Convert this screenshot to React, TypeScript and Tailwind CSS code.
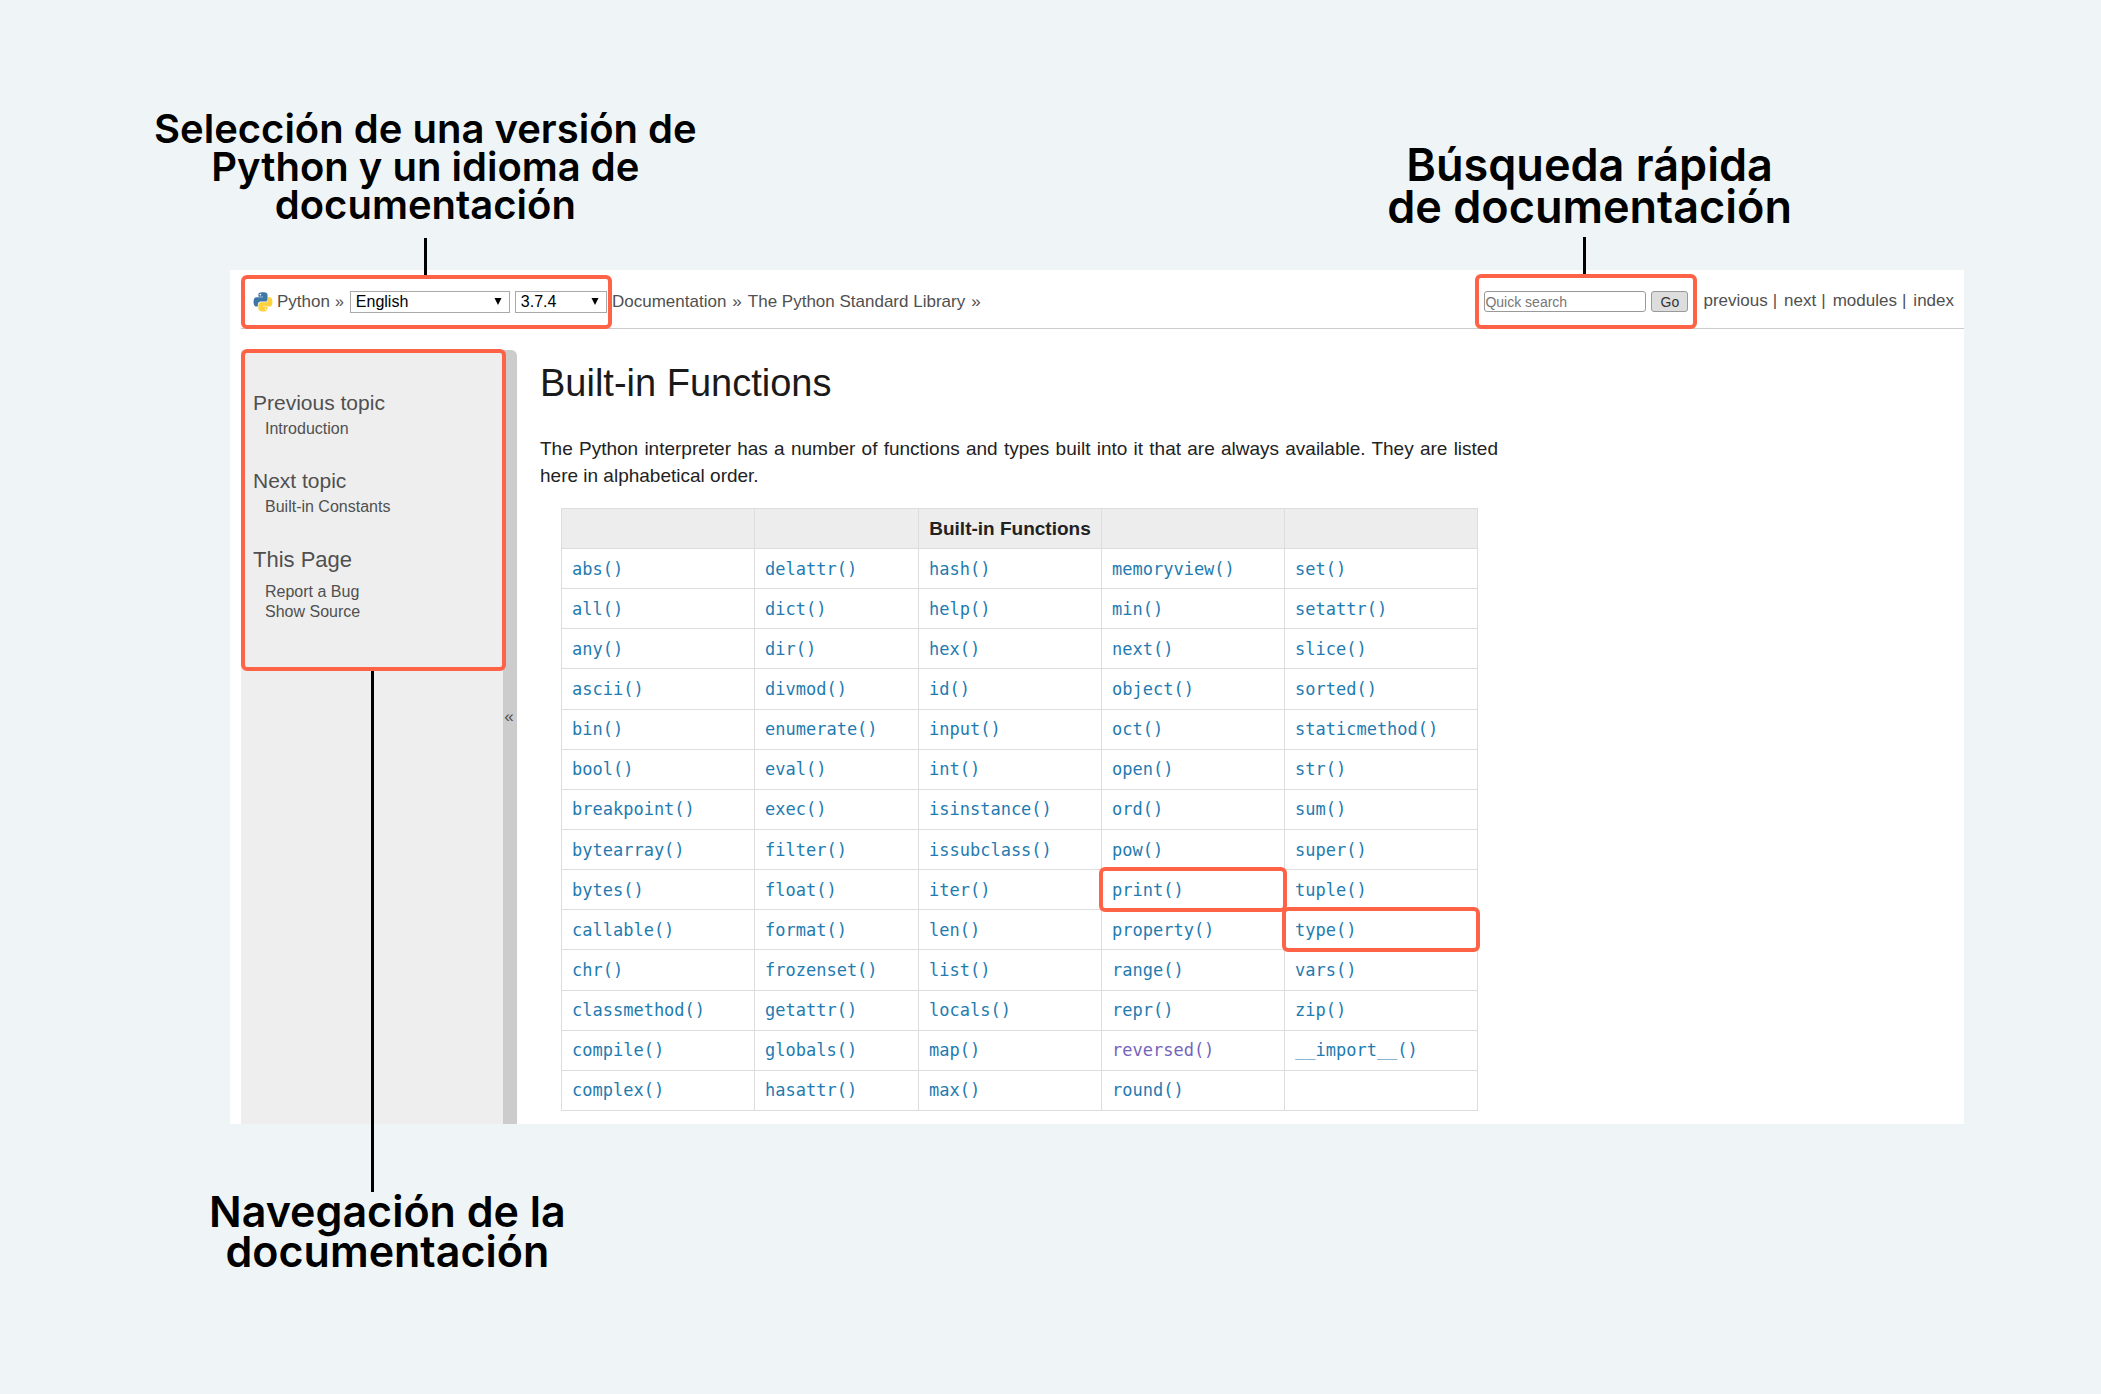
import type { ReactNode } from "react";

const rows: string[][] = [
  ["abs()", "delattr()", "hash()", "memoryview()", "set()"],
  ["all()", "dict()", "help()", "min()", "setattr()"],
  ["any()", "dir()", "hex()", "next()", "slice()"],
  ["ascii()", "divmod()", "id()", "object()", "sorted()"],
  ["bin()", "enumerate()", "input()", "oct()", "staticmethod()"],
  ["bool()", "eval()", "int()", "open()", "str()"],
  ["breakpoint()", "exec()", "isinstance()", "ord()", "sum()"],
  ["bytearray()", "filter()", "issubclass()", "pow()", "super()"],
  ["bytes()", "float()", "iter()", "print()", "tuple()"],
  ["callable()", "format()", "len()", "property()", "type()"],
  ["chr()", "frozenset()", "list()", "range()", "vars()"],
  ["classmethod()", "getattr()", "locals()", "repr()", "zip()"],
  ["compile()", "globals()", "map()", "reversed()", "__import__()"],
  ["complex()", "hasattr()", "max()", "round()", ""],
];

const highlighted = ["print()", "type()"];

function PythonLogo() {
  return (
    <svg viewBox="12 0 104 108" className="mr-1 h-5 w-5 shrink-0" aria-hidden="true">
      <path
        fill="#3d77a8"
        d="M63.391 1.988c-4.222.02-8.252.379-11.8 1.007-10.45 1.846-12.346 5.71-12.346 12.837v9.411h24.693v3.137H29.977c-7.176 0-13.46 4.313-15.426 12.521-2.268 9.405-2.368 15.275 0 25.096 1.755 7.311 5.947 12.519 13.124 12.519h8.491V67.234c0-8.151 7.051-15.34 15.426-15.34h24.665c6.866 0 12.346-5.654 12.346-12.548V15.833c0-6.693-5.646-11.72-12.346-12.837-4.244-.706-8.645-1.027-12.866-1.008zM50.037 9.557c2.55 0 4.634 2.117 4.634 4.721 0 2.593-2.083 4.69-4.634 4.69-2.56 0-4.633-2.097-4.633-4.69-.001-2.604 2.073-4.721 4.633-4.721z"
      />
      <path
        fill="#fdd23c"
        d="M91.682 28.38v10.966c0 8.5-7.208 15.655-15.426 15.655H51.591c-6.756 0-12.346 5.783-12.346 12.549v23.515c0 6.691 5.818 10.628 12.346 12.547 7.816 2.297 15.312 2.713 24.665 0 6.216-1.801 12.346-5.423 12.346-12.547v-9.412H63.938v-3.138h37.012c7.176 0 9.852-5.005 12.348-12.519 2.578-7.735 2.467-15.174 0-25.096-1.774-7.145-5.161-12.521-12.348-12.521h-9.268zM77.809 87.927c2.561 0 4.634 2.097 4.634 4.692 0 2.602-2.074 4.719-4.634 4.719-2.55 0-4.633-2.117-4.633-4.719 0-2.595 2.083-4.692 4.633-4.692z"
      />
    </svg>
  );
}

function Picker({ label, value, width }: { label: string; value: string; width: string }) {
  return (
    <span className={`relative flex ${width}`}>
      <select
        aria-label={label}
        defaultValue={value}
        className="h-[22px] w-full appearance-none border border-[#a9a9a9] bg-white pl-[5px] text-base leading-5 text-black"
      >
        <option>{value}</option>
      </select>
      <svg viewBox="0 0 8 7" className="pointer-events-none absolute top-[7px] right-2 h-[7px] w-2" aria-hidden="true">
        <path d="M0.5 0h7L4 7z" />
      </svg>
    </span>
  );
}

function TopicHeading({ children }: { children: ReactNode }) {
  return <h2 className="text-[21px] leading-7">{children}</h2>;
}

function TopicLink({ children }: { children: ReactNode }) {
  return (
    <a href="#" className="ml-3 block text-base leading-5">
      {children}
    </a>
  );
}

export default function App() {
  return (
    <main className="min-h-screen bg-[#eff5f7] pr-[137px] pl-[230px] font-['Liberation_Sans',Arial,sans-serif]">
      <div className="-ml-[76px] flex justify-between pt-[110px] pr-[172px] pb-[42px] text-center font-['Inter',sans-serif] font-semibold text-black">
        <p className="mb-1 text-[40px] leading-[38px]">
          Selección de una versión de
          <br />
          Python y un idioma de
          <br />
          documentación
        </p>
        <p className="mt-[34px] text-[45px] leading-[42px]">
          Búsqueda rápida
          <br />
          de documentación
        </p>
      </div>

      <div className="bg-white pl-[11px]">
        <header className="flex h-[59px] items-end justify-between border-b border-[#cccccc] text-[17px] text-[#505050]">
          <nav className="flex items-center" aria-label="Breadcrumb">
            <div className="relative -mb-px flex h-[54px] w-[371px] items-center rounded-md border-4 border-[#ff6347] pl-2">
              <span className="absolute right-1/2 bottom-full mb-1 h-[37px] w-[3px] bg-black" />
              <PythonLogo />
              <a href="#">Python</a>
              <span className="mr-[6px] ml-[5px] text-base">»</span>
              <Picker label="Language" value="English" width="w-40" />
              <span className="w-[5px]" />
              <Picker label="Version" value="3.7.4" width="w-[92px]" />
            </div>
            <span className="flex gap-[6px]">
              <a href="#">Documentation</a>
              <span>»</span>
              <a href="#">The Python Standard Library</a>
              <span>»</span>
            </span>
          </nav>
          <div className="flex items-center pr-[10px]">
            <form className="relative -mb-px flex h-[55px] w-[222px] items-center gap-[5px] rounded-md border-4 border-[#ff6347] pl-[5px]">
              <span className="absolute right-1/2 bottom-full mb-1 h-[37px] w-[3px] bg-black" />
              <input
                aria-label="Quick search"
                placeholder="Quick search"
                className="h-[21px] w-[162px] rounded-[3px] border border-[#999999] text-sm leading-4 placeholder:text-[#777777]"
              />
              <button
                type="button"
                className="h-[21px] w-[37px] rounded-[3px] border border-[#999999] bg-[#dddddd] text-sm leading-4 text-[#333333]"
              >
                Go
              </button>
            </form>
            <nav className="ml-[6px] flex gap-[7px]" aria-label="Related">
              <span className="flex gap-[5px]"><a href="#">previous</a>|</span>
              <span className="flex gap-[5px]"><a href="#">next</a>|</span>
              <span className="flex gap-[5px]"><a href="#">modules</a>|</span>
              <a href="#">index</a>
            </nav>
          </div>
        </header>

        <div className="flex gap-[23px] pt-[21px]">
          <aside className="flex w-[276px] shrink-0 rounded-tr-md bg-[#eeeeee] text-[#505050]">
            <div className="w-[262px] shrink-0">
              <div className="relative -mt-px w-[265px] rounded-md border-4 border-[#ff6347] pt-9 pb-[45px] pl-2">
                <TopicHeading>Previous topic</TopicHeading>
                <div className="mt-[2px] mb-7">
                  <TopicLink>Introduction</TopicLink>
                </div>
                <TopicHeading>Next topic</TopicHeading>
                <div className="mt-[2px] mb-7">
                  <TopicLink>Built-in Constants</TopicLink>
                </div>
                <h2 className="text-[22px] leading-[30px]">This Page</h2>
                <div className="mt-[7px]">
                  <TopicLink>Report a Bug</TopicLink>
                  <TopicLink>Show Source</TopicLink>
                </div>
                <span className="absolute top-full right-1/2 mt-1 h-[521px] w-[3px] bg-black" />
              </div>
            </div>
            <button
              type="button"
              aria-label="Collapse sidebar"
              className="w-[14px] rounded-tr-md bg-[#cccccc] pr-[2px] pb-[40px] text-[17px]"
            >
              «
            </button>
          </aside>

          <article className="min-w-0 flex-1 pt-[10px] pb-[13px] text-[#222222]">
            <h1 className="text-[38px] leading-[46px] text-[#1a1a1a]">Built-in Functions</h1>
            <p className="mt-[29px] max-w-[958px] text-justify text-[19px] leading-[27px]">
              The Python interpreter has a number of functions and types built into it that are always available. They
              are listed here in alphabetical order.
            </p>
            <table className="mt-[19px] ml-[21px] h-[603px] w-[916px] table-fixed border-collapse">
              <colgroup>
                <col className="w-[193px]" />
                <col className="w-[164px]" />
                <col className="w-[183px]" />
                <col className="w-[183px]" />
                <col className="w-[193px]" />
              </colgroup>
              <thead>
                <tr className="h-10 bg-[#ededed]">
                  {["", "", "Built-in Functions", "", ""].map((title, i) => (
                    <th key={i} className="border border-[#dddddd] text-[19px] leading-6 font-bold whitespace-nowrap">
                      {title}
                    </th>
                  ))}
                </tr>
              </thead>
              <tbody>
                {rows.map((row) => (
                  <tr key={row[0]} className="h-10">
                    {row.map((name, i) => (
                      <td
                        key={i}
                        className="relative border border-[#dddddd] pl-[10px] font-['DejaVu_Sans_Mono',monospace] text-[17px] leading-6"
                      >
                        <a href="#" className={name === "reversed()" ? "text-[#7464bb]" : "text-[#1f7bb0]"}>
                          {name}
                        </a>
                        {highlighted.includes(name) && (
                          <span className="pointer-events-none absolute -inset-[3px] rounded-md border-4 border-[#ff6347]" />
                        )}
                      </td>
                    ))}
                  </tr>
                ))}
              </tbody>
            </table>
          </article>
        </div>
      </div>

      <p className="-ml-[21px] w-fit pt-[67px] text-center font-['Inter',sans-serif] text-[43px] leading-10 font-semibold text-black">
        Navegación de la
        <br />
        documentación
      </p>
    </main>
  );
}
